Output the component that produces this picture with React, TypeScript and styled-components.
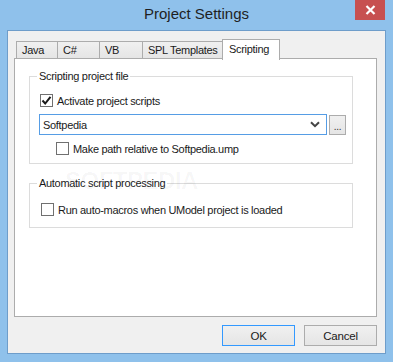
import styled, { createGlobalStyle } from "styled-components"

const tabs = [
  { label: "Java", width: 42 },
  { label: "C#", width: 43 },
  { label: "VB", width: 44 },
  { label: "SPL Templates", width: 83 },
  { label: "Scripting", width: 58, active: true },
]

function CheckBox({ checked }: { checked?: boolean }) {
  return (
    <Box>
      {checked && (
        <svg width="11" height="11" viewBox="0 0 11 11">
          <path d="M1.5 5.5 L4.2 8.5 L9.5 1.8" fill="none" stroke="#1a1a1a" strokeWidth="2" />
        </svg>
      )}
    </Box>
  )
}

function App() {
  return (
    <Window>
      <GlobalStyles />
      <TitleBar>
        <Title>Project Settings</Title>
        <CloseButton>
          <svg width="11" height="10" viewBox="0 0 11 10">
            <path d="M1.5 1 L9.5 9 M9.5 1 L1.5 9" stroke="#fff" strokeWidth="2.2" />
          </svg>
        </CloseButton>
      </TitleBar>
      <Client>
        <TabRow>
          {tabs.map((t) => (
            <Tab key={t.label} $w={t.width} $active={t.active}>
              {t.label}
            </Tab>
          ))}
        </TabRow>
        <Panel>
          <Watermark>SOFTPEDIA<sup>™</sup></Watermark>
          <Group $pad={7}>
            <Legend>Scripting project file</Legend>
            <CheckRow $indent={10} $top={10}>
              <CheckBox checked />
              Activate project scripts
            </CheckRow>
            <ComboRow>
              <Combo>
                <span>Softpedia</span>
                <svg width="10" height="7" viewBox="0 0 10 7">
                  <path d="M1 1.2 L5 5.2 L9 1.2" fill="none" stroke="#444" strokeWidth="2" />
                </svg>
              </Combo>
              <BrowseButton>...</BrowseButton>
            </ComboRow>
            <CheckRow $indent={26} $top={6}>
              <CheckBox />
              Make path relative to Softpedia.ump
            </CheckRow>
          </Group>
          <Group $gap={12} $pad={10}>
            <Legend>Automatic script processing</Legend>
            <CheckRow $indent={11} $top={12}>
              <CheckBox />
              Run auto-macros when UModel project is loaded
            </CheckRow>
          </Group>
        </Panel>
        <ButtonRow>
          <DialogButton $default>OK</DialogButton>
          <DialogButton>Cancel</DialogButton>
        </ButtonRow>
      </Client>
    </Window>
  )
}

const Window = styled.div`
  width: 393px;
  height: 362px;
  background: #8fc1eb;
  display: flex;
  flex-direction: column;
  padding: 0 7px 8px 7px;
`

const TitleBar = styled.div`
  height: 30px;
  display: flex;
  align-items: flex-start;
  justify-content: center;
  position: relative;
`

const Title = styled.div`
  margin-top: 5px;
  font-family: "Liberation Sans", Arial, sans-serif;
  font-size: 15px;
  letter-spacing: 0;
  color: #1f1f1f;
`

const CloseButton = styled.div`
  position: absolute;
  right: 1px;
  top: 0;
  width: 30px;
  height: 20px;
  background: #c75050;
  display: flex;
  align-items: center;
  justify-content: center;
`

const Client = styled.div`
  flex: 1;
  background: #f0f0f0;
  border: 1px solid #6e9dca;
  display: flex;
  flex-direction: column;
  padding: 7px 8px 0 6px;
`

const TabRow = styled.div`
  display: flex;
  align-items: flex-end;
  height: 21px;
  padding-left: 2px;
  position: relative;
  z-index: 1;
`

const Tab = styled.div<{ $w: number; $active?: boolean }>`
  width: ${(p) => p.$w}px;
  height: ${(p) => (p.$active ? 21 : 18)}px;
  margin-left: ${(p) => (p.$active ? -3 : -1)}px;
  margin-right: ${(p) => (p.$active ? -2 : 0)}px;
  margin-bottom: ${(p) => (p.$active ? -1 : 0)}px;
  border: 1px solid #acacac;
  border-bottom: ${(p) => (p.$active ? "none" : "1px solid #acacac")};
  background: ${(p) => (p.$active ? "#fff" : "linear-gradient(#f0f0f0, #e5e5e5)")};
  position: relative;
  z-index: ${(p) => (p.$active ? 2 : 0)};
  padding: ${(p) => (p.$active ? "3px 0 0 6px" : "2px 0 0 5px")};
  white-space: nowrap;
  &:first-child {
    margin-left: 0;
  }
`

const Panel = styled.div`
  position: relative;
  height: 259px;
  margin-top: -1px;
  background: #fff;
  border: 1px solid #acacac;
  padding: 10px 23px 0 14px;
`

const Watermark = styled.div`
  position: absolute;
  left: 50px;
  top: 108px;
  font-family: "Liberation Sans", Arial, sans-serif;
  font-size: 24px;
  font-weight: bold;
  letter-spacing: -0.5px;
  color: rgba(0, 0, 0, 0.035);
  pointer-events: none;
  sup {
    font-size: 8px;
    vertical-align: top;
    margin-left: 2px;
  }
`

const Group = styled.fieldset<{ $gap?: number; $pad: number }>`
  margin: ${(p) => p.$gap ?? 0}px 0 0 0;
  padding: 0 0 ${(p) => p.$pad}px 0;
  border: 1px solid #dcdcdc;
  min-width: 0;
`

const Legend = styled.legend`
  margin-left: 7px;
  padding: 0 2px;
  line-height: 14px;
  color: #1a1a1a;
`

const CheckRow = styled.label<{ $indent: number; $top: number }>`
  display: flex;
  align-items: center;
  gap: 4px;
  height: 15px;
  margin: ${(p) => p.$top}px 0 0 ${(p) => p.$indent}px;
  color: #1a1a1a;
`

const Box = styled.span`
  width: 13px;
  height: 13px;
  border: 1px solid #707070;
  background: #fff;
  display: flex;
  align-items: center;
  justify-content: center;
`

const ComboRow = styled.div`
  display: flex;
  align-items: center;
  gap: 2px;
  margin: 6px 0 0 9px;
`

const Combo = styled.div`
  width: 288px;
  height: 21px;
  border: 1px solid #569de5;
  background: #fff;
  display: flex;
  align-items: center;
  justify-content: space-between;
  padding: 0 6px 0 3px;
  color: #1a1a1a;
`

const BrowseButton = styled.div`
  width: 17px;
  height: 20px;
  border: 1px solid #acacac;
  background: linear-gradient(#f0f0f0, #e5e5e5);
  display: flex;
  align-items: flex-end;
  justify-content: center;
  font-size: 10px;
  line-height: 14px;
  color: #333;
`

const ButtonRow = styled.div`
  display: flex;
  justify-content: flex-end;
  gap: 9px;
  margin-top: 8px;
`

const DialogButton = styled.button<{ $default?: boolean }>`
  width: 73px;
  height: 21px;
  font-family: "Liberation Sans", Arial, sans-serif;
  font-size: 11.5px;
  letter-spacing: -0.2px;
  color: #1a1a1a;
  border: 1px solid ${(p) => (p.$default ? "#3399ff" : "#acacac")};
  background: linear-gradient(#f0f0f0, #e5e5e5);
  padding: 0;
`

const GlobalStyles = createGlobalStyle`
  * {
    box-sizing: border-box;
  }
  body {
    margin: 0;
    font-family: "Liberation Sans", Arial, sans-serif;
    font-size: 11px;
    letter-spacing: -0.3px;
    color: #1a1a1a;
  }
`

export default App
